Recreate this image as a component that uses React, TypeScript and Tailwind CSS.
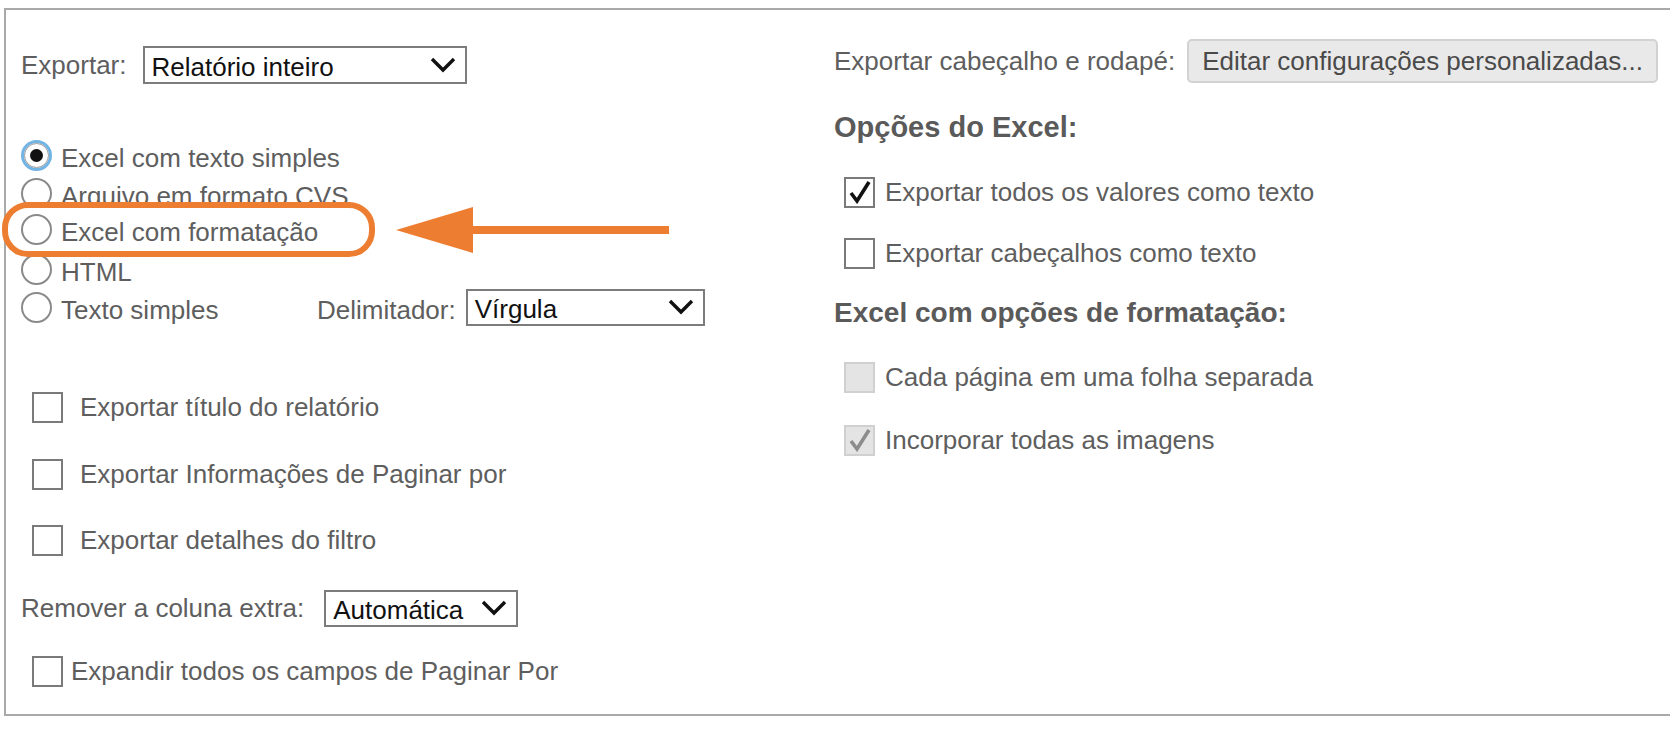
import React from "react";

const font = { fontFamily: '"Liberation Sans", Arial, sans-serif' };

const Chevron = () => (
  <svg width="28" height="20" viewBox="0 0 28 20" className="shrink-0">
    <polyline points="3,4 14,15 25,4" fill="none" stroke="#111" strokeWidth="3.4" />
  </svg>
);

const Select = ({ value, className }: { value: string; className: string }) => (
  <div
    className={`flex items-center justify-between border-2 border-[#7c7c7c] bg-white pl-[7px] pr-[8px] text-[26px] text-[#111] ${className}`}
  >
    <span className="leading-none pt-[3px]">{value}</span>
    <Chevron />
  </div>
);

const Radio = ({ checked }: { checked?: boolean }) =>
  checked ? (
    <span className="flex h-[31px] w-[31px] shrink-0 items-center justify-center rounded-full border-[3px] border-[#72b4e4] bg-white">
      <span className="flex h-[25px] w-[25px] items-center justify-center rounded-full border border-[#9a9a9a]">
        <span className="h-[13px] w-[13px] rounded-full bg-[#111]" />
      </span>
    </span>
  ) : (
    <span className="h-[31px] w-[31px] shrink-0 rounded-full border-2 border-[#8a8a8a] bg-white" />
  );

const Check = ({ checked, disabled }: { checked?: boolean; disabled?: boolean }) => (
  <span
    className={`flex h-[31px] w-[31px] shrink-0 items-center justify-center border-2 ${
      disabled ? "border-[#d0d0d0] bg-[#e4e4e4]" : "border-[#7a7a7a] bg-white"
    }`}
  >
    {checked && (
      <svg width="24" height="24" viewBox="0 0 24 24">
        <polyline
          points="3,13 9,21 21,2"
          fill="none"
          stroke={disabled ? "#8c8c8c" : "#111"}
          strokeWidth="3.6"
        />
      </svg>
    )}
  </span>
);

const RadioRow = ({ label, checked }: { label: string; checked?: boolean }) => (
  <div className="flex h-[38px] items-center bg-white pl-[15px]">
    <Radio checked={checked} />
    <span className="ml-[9px] pt-[5px] leading-none">{label}</span>
  </div>
);

const LeftCheck = ({ label, className }: { label: string; className: string }) => (
  <div className={`flex h-[42px] items-center pl-[26px] ${className}`}>
    <Check />
    <span className="ml-[17px] leading-none">{label}</span>
  </div>
);

const RightCheck = ({
  label,
  checked,
  disabled,
  className,
}: {
  label: string;
  checked?: boolean;
  disabled?: boolean;
  className: string;
}) => (
  <div className={`flex h-[34px] items-center pl-[10px] ${className}`}>
    <Check checked={checked} disabled={disabled} />
    <span className="ml-[10px] leading-none">{label}</span>
  </div>
);

export default function App() {
  return (
    <div className="h-[731px] w-[1670px] overflow-hidden bg-white pl-[4px] pt-[8px]" style={font}>
      <div className="flex h-[708px] border-b-2 border-l-2 border-t-2 border-[#a9a9a9] text-[26px] text-[#5e5e5e]">
        {/* left column */}
        <div className="flex w-[828px] shrink-0 flex-col">
          <div className="mt-[36px] flex h-[38px] items-center pl-[15px]">
            <span className="leading-none">Exportar:</span>
            <Select value="Relatório inteiro" className="ml-[16px] h-[38px] w-[324px]" />
          </div>

          <div className="mt-[52px] flex flex-col">
            <RadioRow label="Excel com texto simples" checked />
            <RadioRow label="Arquivo em formato CVS" />
            <div className="relative z-10 -mb-[7px] -mt-[10px] flex h-[55px] items-center">
              <div className="-ml-[4px] flex h-[55px] w-[373px] items-center rounded-[26px] border-[6px] border-[#ED7D31] bg-white pl-[13px]">
                <Radio />
                <span className="ml-[9px] pt-[5px] leading-none">Excel com formatação</span>
              </div>
              <svg width="275" height="50" viewBox="0 0 275 50" className="ml-[21px]">
                <polygon points="0,25 77,2 77,48" fill="#ED7D31" />
                <rect x="72" y="21" width="201" height="8" fill="#ED7D31" />
              </svg>
            </div>
            <RadioRow label="HTML" />
            <div className="flex h-[38px] items-center bg-white pl-[15px]">
              <Radio />
              <span className="ml-[9px] w-[256px] pt-[5px] leading-none">Texto simples</span>
              <span className="pt-[5px] leading-none">Delimitador:</span>
              <Select value="Vírgula" className="ml-[10px] h-[37px] w-[239px]" />
            </div>
          </div>

          <LeftCheck label="Exportar título do relatório" className="mt-[60px]" />
          <LeftCheck label="Exportar Informações de Paginar por" className="mt-[25px]" />
          <LeftCheck label="Exportar detalhes do filtro" className="mt-[24px]" />

          <div className="mt-[28px] flex h-[38px] items-center pl-[15px]">
            <span className="leading-none">Remover a coluna extra:</span>
            <Select value="Automática" className="ml-[20px] h-[37px] w-[194px]" />
          </div>

          <div className="mt-[23px] flex h-[42px] items-center pl-[26px]">
            <Check />
            <span className="ml-[8px] leading-none">Expandir todos os campos de Paginar Por</span>
          </div>
        </div>

        {/* right column */}
        <div className="flex flex-1 flex-col">
          <div className="mt-[29px] flex h-[44px] items-center">
            <span className="leading-none">Exportar cabeçalho e rodapé:</span>
            <button className="ml-[12px] flex h-[44px] w-[471px] items-center rounded-[5px] border-2 border-[#d2d2d2] bg-[#e9e9e9] pl-[13px] text-[26px] text-[#4a4a4a]">
              Editar configurações personalizadas...
            </button>
          </div>

          <div className="mt-[29px] flex h-[32px] items-center text-[29px] font-bold text-[#5a5a5a]">
            Opções do Excel:
          </div>

          <RightCheck label="Exportar todos os valores como texto" checked className="mt-[31px]" />
          <RightCheck label="Exportar cabeçalhos como texto" className="mt-[27px]" />

          <div className="mt-[27px] flex h-[32px] items-center text-[28px] font-bold text-[#5a5a5a]">
            Excel com opções de formatação:
          </div>

          <RightCheck label="Cada página em uma folha separada" disabled className="mt-[31px]" />
          <RightCheck label="Incorporar todas as imagens" checked disabled className="mt-[29px]" />
        </div>
      </div>
    </div>
  );
}
